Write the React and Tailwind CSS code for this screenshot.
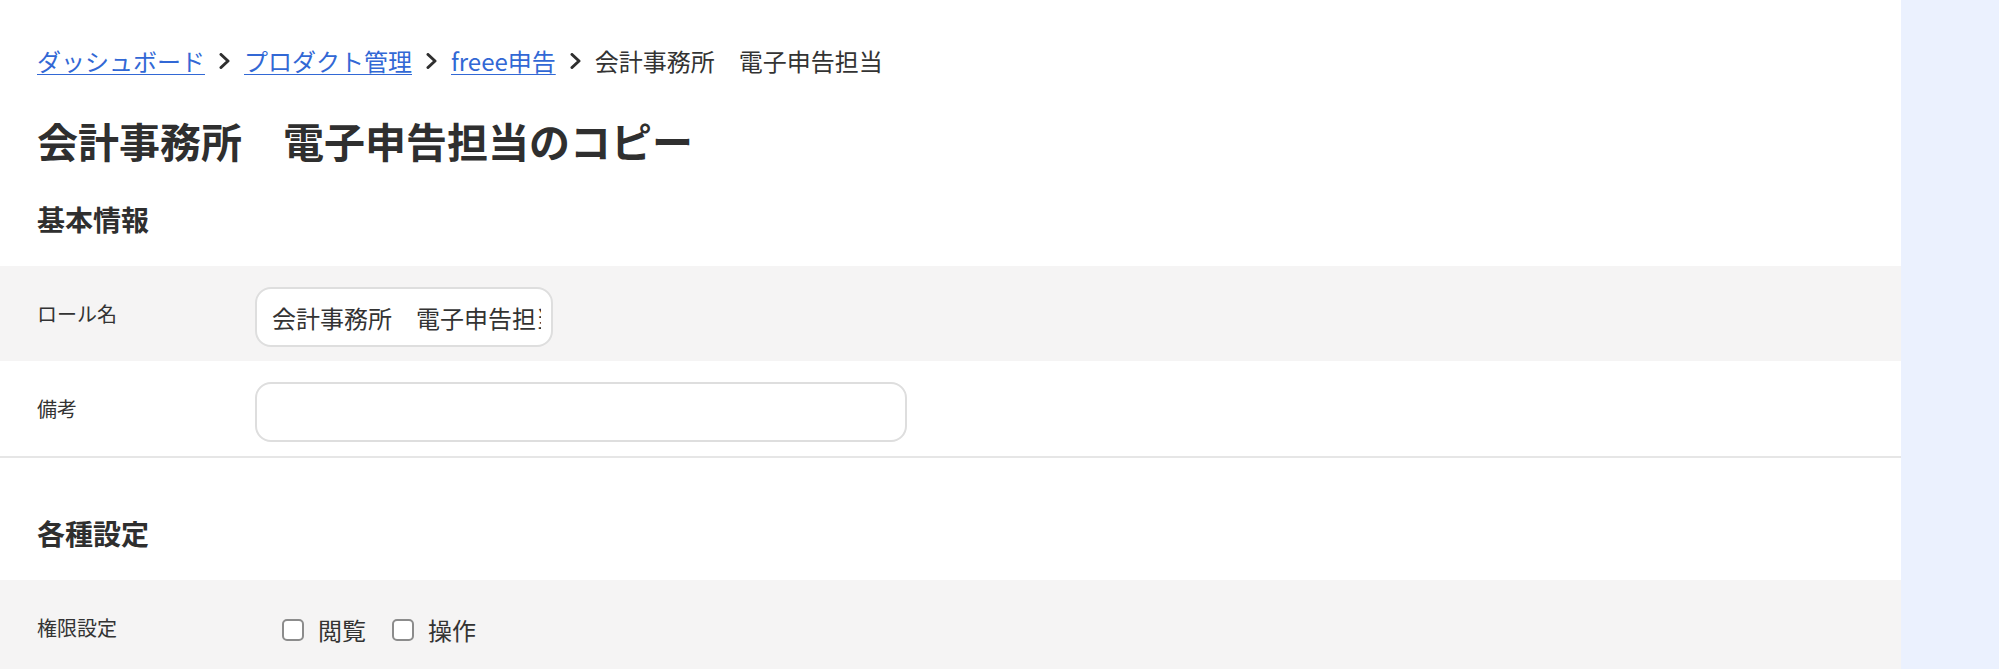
import React, { useState } from 'react';

const font = { fontFamily: '"Noto Sans CJK JP", "Noto Sans", sans-serif' };

function Chevron() {
  return (
    <svg className="mx-[13px] h-[16px] w-[13px] shrink-0" viewBox="0 0 13 16" fill="none">
      <path d="M3 1.5 L10 8 L3 14.5" stroke="#2f2f2f" strokeWidth="3" strokeLinecap="round" strokeLinejoin="round" />
    </svg>
  );
}

function Crumb({ children }) {
  return (
    <a href="#" className="text-[#3268d5] underline underline-offset-[3px] decoration-1">
      {children}
    </a>
  );
}

function Row({ label, gray, children }) {
  return (
    <div className={`flex h-[95px] items-center pl-[37px] ${gray ? 'bg-[#f5f4f4]' : 'bg-white'}`}>
      <div className="w-[218px] shrink-0 text-[20px] leading-[30px] text-[#333]">{label}</div>
      <div className="flex items-center">{children}</div>
    </div>
  );
}

function Check({ label, checked, onChange }) {
  return (
    <label className="flex cursor-pointer items-center gap-[14px]">
      <span
        onClick={onChange}
        className={`h-[22px] w-[22px] rounded-[5px] border-2 ${checked ? 'border-[#3268d5] bg-[#3268d5]' : 'border-[#8c8c8c] bg-white'}`}
      />
      <span className="text-[24px] leading-[32px] text-[#333]">{label}</span>
    </label>
  );
}

export default function App() {
  const [roleName, setRoleName] = useState('会計事務所　電子申告担当');
  const [note, setNote] = useState('');
  const [perm, setPerm] = useState({ view: false, edit: false });

  return (
    <div className="flex h-[669px] w-full overflow-hidden bg-white" style={font}>
      <main className="w-[1901px] shrink-0">
        {/* Breadcrumb */}
        <nav className="flex items-center pl-[37px] pt-[43px] text-[24px] leading-[36px] text-[#333]">
          <Crumb>ダッシュボード</Crumb>
          <Chevron />
          <Crumb>プロダクト管理</Crumb>
          <Chevron />
          <Crumb>freee申告</Crumb>
          <Chevron />
          <span>会計事務所　電子申告担当</span>
        </nav>

        <h1 className="mt-[37px] pl-[37px] text-[41px] font-bold leading-[48px] text-[#2f2f2f]">
          会計事務所　電子申告担当のコピー
        </h1>

        <h2 className="mt-[35px] pl-[37px] text-[28px] font-bold leading-[40px] text-[#2f2f2f]">基本情報</h2>

        <div className="mt-[27px] border-b-2 border-[#e6e6e6]">
          <Row label="ロール名" gray>
            <input
              value={roleName}
              onChange={e => setRoleName(e.target.value)}
              className="mt-[7px] h-[60px] w-[298px] rounded-[16px] border-2 border-[#dedede] bg-white pl-[15px] pr-[10px] text-[24px] text-[#333] outline-none"
            />
          </Row>
          <Row label="備考">
            <input
              value={note}
              onChange={e => setNote(e.target.value)}
              className="mt-[7px] h-[60px] w-[652px] rounded-[16px] border-2 border-[#dedede] bg-white px-[15px] text-[24px] text-[#333] outline-none"
            />
          </Row>
        </div>

        <h2 className="mt-[55px] pl-[37px] text-[28px] font-bold leading-[40px] text-[#2f2f2f]">各種設定</h2>

        <div className="mt-[27px]">
          <Row label="権限設定" gray>
            <div className="ml-[27px] mt-[4px] flex items-center gap-[26px]">
              <Check label="閲覧" checked={perm.view} onChange={() => setPerm(p => ({ ...p, view: !p.view }))} />
              <Check label="操作" checked={perm.edit} onChange={() => setPerm(p => ({ ...p, edit: !p.edit }))} />
            </div>
          </Row>
        </div>
      </main>
      <aside className="flex-1 bg-[#ebf1fe]" />
    </div>
  );
}
